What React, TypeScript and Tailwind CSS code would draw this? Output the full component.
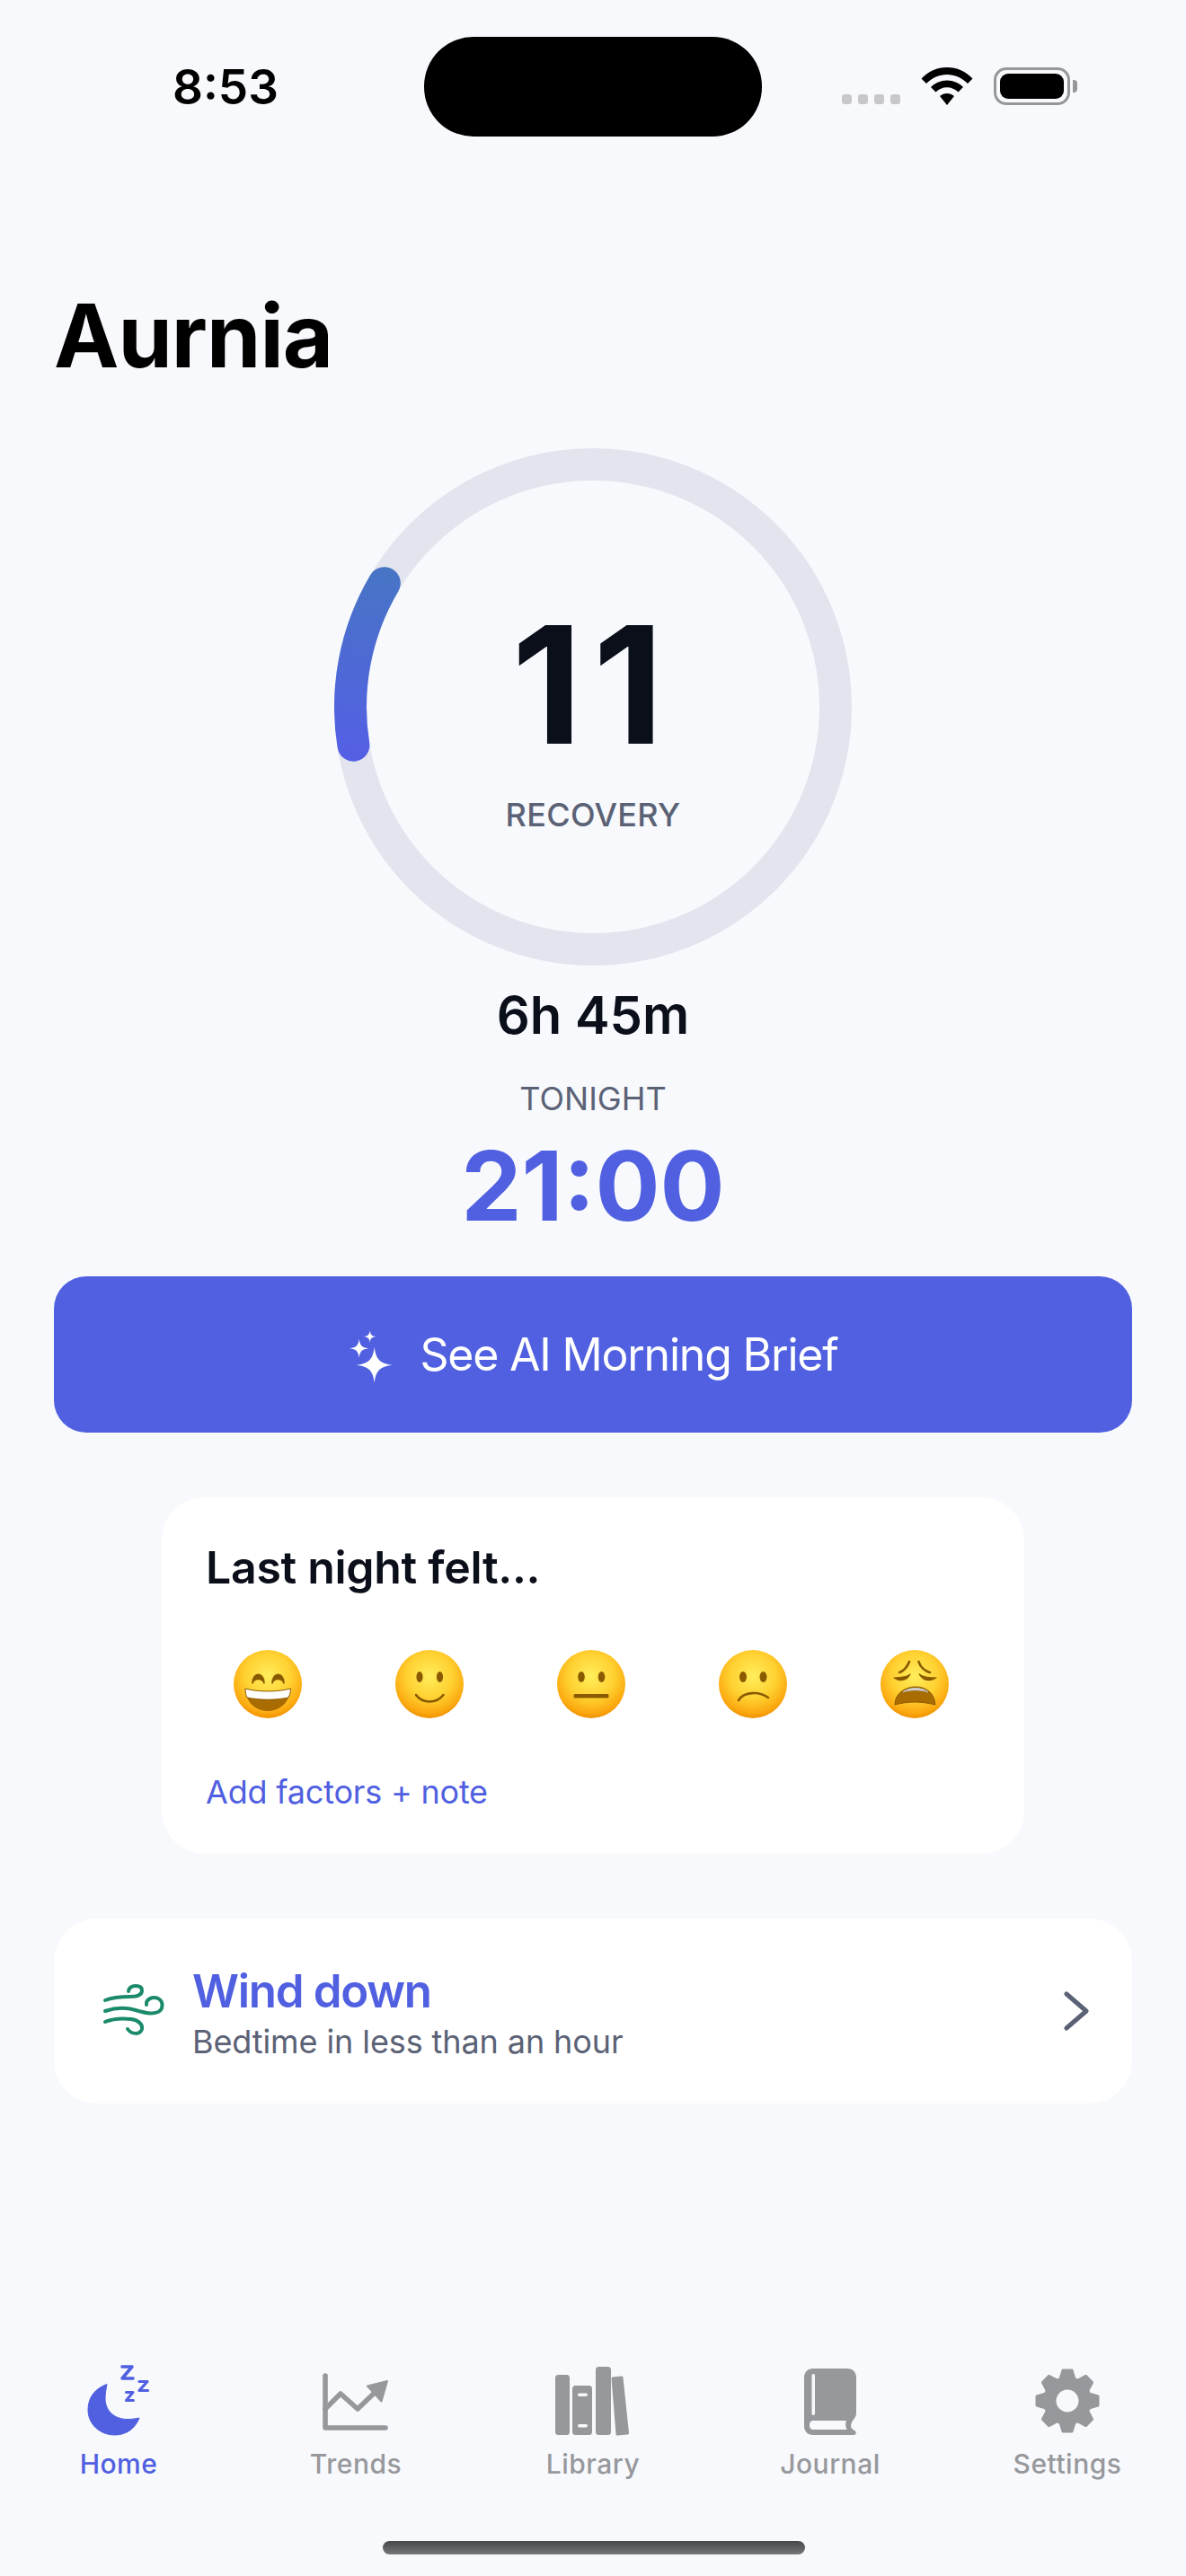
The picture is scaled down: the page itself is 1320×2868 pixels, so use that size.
import React from "react";

const INDIGO = "#5060E0";
const GRAY = "#97989C";

function Star({ cx, cy, r }: { cx: number; cy: number; r: number }) {
  const k = r * 0.14;
  return (
    <path
      d={`M${cx} ${cy - r} C${cx + k * 0.6} ${cy - k * 2.2} ${cx + k * 2.2} ${cy - k * 0.6} ${cx + r} ${cy} C${cx + k * 2.2} ${cy + k * 0.6} ${cx + k * 0.6} ${cy + k * 2.2} ${cx} ${cy + r} C${cx - k * 0.6} ${cy + k * 2.2} ${cx - k * 2.2} ${cy + k * 0.6} ${cx - r} ${cy} C${cx - k * 2.2} ${cy - k * 0.6} ${cx - k * 0.6} ${cy - k * 2.2} ${cx} ${cy - r}Z`}
      fill="#fff"
    />
  );
}

function Sparkles() {
  return (
    <svg width="70" height="80" viewBox="0 0 70 80" className="shrink-0" aria-hidden>
      <Star cx={37.7} cy={51.7} r={20} />
      <Star cx={20.7} cy={33.3} r={10.5} />
      <Star cx={32.7} cy={20} r={6.8} />
    </svg>
  );
}

type Mood = "grin" | "smile" | "neutral" | "frown" | "weary";

function Emoji({ kind }: { kind: Mood }) {
  const id = `face-${kind}`;
  const brown = "#8A5A00";
  return (
    <svg width="76" height="76" viewBox="-38 -38 76 76" className="shrink-0" aria-hidden>
      <defs>
        <radialGradient id={id} cx="50%" cy="38%" r="62%">
          <stop offset="0%" stopColor="#FFEE5C" />
          <stop offset="55%" stopColor="#FFD030" />
          <stop offset="88%" stopColor="#FBA90F" />
          <stop offset="100%" stopColor="#F09000" />
        </radialGradient>
      </defs>
      <circle r="38" fill={`url(#${id})`} />
      {kind === "grin" && (
        <g>
          <path d="M-17 -1 C-17 -14 -4 -14 -4 -1 C-6 -7 -15 -7 -17 -1Z" fill={brown} stroke={brown} strokeWidth="1.5" strokeLinejoin="round" />
          <path d="M5 -1 C5 -14 18 -14 18 -1 C16 -7 7 -7 5 -1Z" fill={brown} stroke={brown} strokeWidth="1.5" strokeLinejoin="round" />
          <path d="M-25 5 C-10 9 10 9 25.5 5 C25 20 13 30 0 30 C-13 30 -25 20 -25 5Z" fill="#A96C00" />
          <path d="M-25 5 C-10 9 10 9 25.5 5 C25.5 9 24.5 12 23 15 C8 18 -8 18 -23 15 C-24.5 12 -25 9 -25 5Z" fill="#fff" stroke="#8A5A00" strokeWidth="1" />
        </g>
      )}
      {kind === "smile" && (
        <g fill={brown}>
          <ellipse cx="-11" cy="-8" rx="3.6" ry="6" />
          <ellipse cx="11.5" cy="-8" rx="3.6" ry="6" />
          <path d="M-15 12 C-8 22 8 22 15.5 12" fill="none" stroke={brown} strokeWidth="2.6" strokeLinecap="round" />
        </g>
      )}
      {kind === "neutral" && (
        <g fill={brown}>
          <ellipse cx="-11" cy="-8" rx="3.8" ry="6" />
          <ellipse cx="11.5" cy="-8" rx="3.8" ry="6" />
          <rect x="-19.5" y="11" width="39" height="4.5" rx="1.5" />
        </g>
      )}
      {kind === "frown" && (
        <g fill={brown}>
          <ellipse cx="-11" cy="-8" rx="4" ry="6" />
          <ellipse cx="11.5" cy="-8" rx="4" ry="6" />
          <path d="M-16 18 C-10 8 7 8 17 15" fill="none" stroke={brown} strokeWidth="2.6" strokeLinecap="round" />
        </g>
      )}
      {kind === "weary" && (
        <g>
          <path d="M-17 -13 C-13 -14 -8 -19 -6 -25" fill="none" stroke={brown} strokeWidth="2.6" strokeLinecap="round" />
          <path d="M17 -13 C12 -14 6 -19 4.500 -25" fill="none" stroke={brown} strokeWidth="2.6" strokeLinecap="round" />
          <path d="M-23 -7 C-17 -3 -9 -3 -5 -11 C-8 -8 -16 -7 -23 -7Z" fill={brown} stroke={brown} strokeWidth="1.2" strokeLinejoin="round" />
          <path d="M24 -7 C17 -3 10 -3 5 -11 C9 -8 16 -7 24 -7Z" fill={brown} stroke={brown} strokeWidth="1.2" strokeLinejoin="round" />
          <path d="M-22 23 C-22 10 -10 3 1 3 C13 3 22 10 23 23 C8 19 -8 19 -22 23Z" fill="#A96C00" stroke={brown} strokeWidth="1" strokeLinejoin="round" />
          <path d="M-13 9 C-7 3 9 3 15 9 C8 6 -6 6 -13 9Z" fill="#E4E4E4" stroke="#B8B8B8" strokeWidth="1" />
        </g>
      )}
    </svg>
  );
}

function WindIcon() {
  return (
    <svg width="90" height="80" viewBox="0 0 90 80" fill="none" stroke="#1B8A6B" strokeWidth="4" strokeLinecap="round" className="shrink-0" aria-hidden>
      <path d="M12 28 C22 24 32 24 40 24 C49 24 53 21 53 17 C53 13 49 12 46 12 C41 12 38 15 38 18" />
      <path d="M12 40 C24 36 36 36 46 39 C56 42 64 44 71 41 C77 38 77 29 71 26 C65 23 57 27 58 33" />
      <path d="M12 52 C22 48 32 48 41 49 C49 50 54 55 53 60 C51 67 41 66 37 60" />
    </svg>
  );
}

function HomeIcon() {
  return (
    <svg width="80" height="84" viewBox="92 2632 80 84" aria-hidden>
      <path fill={INDIGO} stroke={INDIGO} strokeWidth="1" strokeLinejoin="round" d="M119 2655.500 C106 2660 98 2670 98 2684 C98 2700 111 2712 128 2712 C141 2712 151 2704 155 2693 C150 2694 146 2694.500 141 2694.500 C127 2694 117 2685 117 2671 C117 2666 118 2661 119 2655.500Z" />
      <g fill="none" stroke={INDIGO} strokeLinejoin="round" strokeLinecap="round">
        <path strokeWidth="3.600" d="M136 2636 H147 L136 2649 H148" />
        <path strokeWidth="3.200" d="M155 2652.500 H164 L155 2662.500 H164.500" />
        <path strokeWidth="3" d="M140.500 2664.500 H148 L140.500 2673.500 H148.500" />
      </g>
    </svg>
  );
}

function TrendsIcon() {
  return (
    <svg width="80" height="84" viewBox="355 2632 80 84" aria-hidden>
      <path fill="none" stroke={GRAY} strokeWidth="5.600" strokeLinecap="round" strokeLinejoin="round" d="M361 2646 V2704 H428" />
      <path fill="none" stroke={GRAY} strokeWidth="5.600" strokeLinecap="round" strokeLinejoin="round" d="M361 2683 L378 2666 L397 2683 L418 2663" />
      <path fill={GRAY} stroke={GRAY} strokeWidth="2" strokeLinejoin="round" d="M430 2652 L408 2657.500 L423.500 2674.500Z" />
    </svg>
  );
}

function LibraryIcon() {
  return (
    <svg width="84" height="84" viewBox="618 2632 84 84" aria-hidden>
      <rect x="618" y="2645" width="16" height="67" rx="3.500" fill={GRAY} />
      <rect x="637" y="2657" width="22" height="55" rx="3.500" fill={GRAY} />
      <rect x="643" y="2665.500" width="11" height="3.500" rx="1.700" fill="#F7F9FD" />
      <rect x="643" y="2700" width="11" height="3.500" rx="1.700" fill="#F7F9FD" />
      <rect x="663" y="2636" width="17" height="76" rx="3.500" fill={GRAY} />
      <path fill={GRAY} stroke={GRAY} strokeWidth="3" strokeLinejoin="round" d="M682 2649 L692 2648 L698.500 2710 L687 2711Z" />
    </svg>
  );
}

function JournalIcon() {
  return (
    <svg width="66" height="84" viewBox="890 2632 66 84" aria-hidden>
      <path fill={GRAY} d="M904 2638 H942 C948 2638 952 2642 952 2648 V2688 C952 2692 949 2694 947 2698 C945 2702 946 2705 950 2707 C953 2709 952 2712 949 2712 H904 C898 2712 894 2708 894 2702 V2648 C894 2642 898 2638 904 2638Z" />
      <rect x="902.500" y="2644" width="3.500" height="46" rx="1.700" fill="#F7F9FD" />
      <path fill="#F7F9FD" d="M904 2696 H941 C939.500 2699.500 940 2703 941.500 2706 H904 C901 2706 900 2703.500 900 2701 C900 2698.500 901 2696 904 2696Z" />
    </svg>
  );
}

function GearIcon() {
  const angles = [0, 45, 90, 135, 180, 225, 270, 315];
  return (
    <svg width="76" height="84" viewBox="-38 -42 76 84" aria-hidden>
      <path fillRule="evenodd" fill={GRAY} d="M0 -27 A27 27 0 1 1 0 27 A27 27 0 1 1 0 -27Z M0 -12.500 A12.500 12.500 0 1 0 0 12.500 A12.500 12.500 0 1 0 0 -12.500Z" />
      {angles.map((a) => (
        <path key={a} transform={`rotate(${a})`} fill={GRAY} stroke={GRAY} strokeWidth="3" strokeLinejoin="round" d="M-8 -24 L-5 -34 H5 L8 -24Z" />
      ))}
    </svg>
  );
}

function Tab({ label, active, children }: { label: string; active?: boolean; children: React.ReactNode }) {
  return (
    <div className="flex-1 flex flex-col items-center">
      <div className="h-[84px] flex items-center justify-center">{children}</div>
      <span className={`mt-[10px] text-[30px] leading-[36px] tracking-[0.5px] font-medium ${active ? "text-[#5060E0]" : "text-[#97989C]"}`}>{label}</span>
    </div>
  );
}

export default function App() {
  return (
    <div className="w-[1320px] h-[2868px] bg-[#F7F9FD] flex flex-col overflow-hidden text-[#0B0F1A] [font-family:Inter,'Liberation_Sans',sans-serif]">
      {/* Status bar */}
      <div className="flex items-start pt-[41px] shrink-0">
        <div className="w-[472px] pl-[192px] pt-[32px] text-[53px] leading-[48px] font-semibold text-black">8:53</div>
        <div className="w-[376px] h-[111px] rounded-[55px] bg-black shrink-0" />
        <div className="flex items-end gap-[23px] pl-[89px] pt-[34px]">
          <div className="flex gap-[7px] pb-[1px]">
            <span className="w-[11px] h-[11px] rounded-[3px] bg-[#C8C8CC]" />
            <span className="w-[11px] h-[11px] rounded-[3px] bg-[#C8C8CC]" />
            <span className="w-[11px] h-[11px] rounded-[3px] bg-[#C8C8CC]" />
            <span className="w-[11px] h-[11px] rounded-[3px] bg-[#C8C8CC]" />
          </div>
          <svg width="58" height="42" viewBox="0 0 58 42" aria-hidden>
            <path fill="#000" d="M29 0 C40 0 50 4.500 57.500 12.500 L52 18 C45.500 11.500 37.500 8 29 8 C20.500 8 12.500 11.500 6 18 L0.500 12.500 C8 4.500 18 0 29 0Z" />
            <path fill="#000" d="M29 14.500 C36 14.500 42 17.300 47 22 L41.500 27.500 C38 24.300 33.800 22.300 29 22.300 C24.200 22.300 20 24.300 16.500 27.500 L11 22 C16 17.300 22 14.500 29 14.500Z" />
            <path fill="#000" d="M29 29 C32 29 34.500 30 37 32 L29 42 L21 32 C23.500 30 26 29 29 29Z" />
          </svg>
          <div className="flex items-center gap-[3px]">
            <div className="w-[85px] h-[42px] rounded-[14px] border-[3px] border-[#979797] p-[4px]">
              <div className="w-full h-full rounded-[9px] bg-black" />
            </div>
            <span className="w-[5px] h-[14px] rounded-r-[4px] bg-[#979797]" />
          </div>
        </div>
      </div>

      {/* Title */}
      <h1 className="mt-[170px] pl-[60px] text-[97px] leading-[104px] font-bold text-black tracking-[-1px]">Aurnia</h1>

      {/* Ring */}
      <div className="mt-[73px] self-center w-[576px] h-[576px] grid shrink-0">
        <svg width="576" height="576" viewBox="0 0 576 576" className="[grid-area:1/1]" aria-hidden>
          <defs>
            <linearGradient id="arc" gradientUnits="userSpaceOnUse" x1="30" y1="340" x2="60" y2="130">
              <stop offset="0%" stopColor="#5460E4" />
              <stop offset="100%" stopColor="#4775C4" />
            </linearGradient>
          </defs>
          <circle cx="288" cy="288" r="270" fill="none" stroke="#E3E5EE" strokeWidth="36" />
          <path d="M21.400 330.700 A270 270 0 0 1 55.800 150.200" fill="none" stroke="url(#arc)" strokeWidth="36" strokeLinecap="round" />
        </svg>
        <div className="[grid-area:1/1] flex flex-col items-center pt-[172px]">
          <span className="text-[182px] leading-[182px] font-bold tracking-[12px] text-[#0B0F1A]">11</span>
          <span className="mt-[32px] text-[36px] leading-[44px] font-medium tracking-[0.3px] text-[#5B6276]">RECOVERY</span>
        </div>
      </div>

      <div className="mt-[19px] text-center text-[58px] leading-[72px] font-semibold text-[#0B0F1A]">6h 45m</div>
      <div className="mt-[35px] text-center text-[36px] leading-[44px] text-[#5B6276]">TONIGHT</div>
      <div className="mt-[15px] text-center text-[107px] leading-[120px] font-bold text-[#5060E0]">21:00</div>

      {/* Button */}
      <div className="mt-[41px] mx-[60px] h-[174px] rounded-[36px] bg-[#5060E0] flex items-center justify-center gap-[18px] pr-[8px] shrink-0">
        <Sparkles />
        <span className="text-[50px] tracking-[-1.2px] text-white">See AI Morning Brief</span>
      </div>

      {/* Feeling card */}
      <div className="mt-[72px] mx-[180px] h-[397px] rounded-[48px] bg-white pl-[49px] pt-[46px] shrink-0">
        <div className="text-[50px] leading-[64px] font-semibold tracking-[-0.3px] text-[#0B0F1A]">Last night felt...</div>
        <div className="mt-[60px] flex items-center gap-[104px] pl-[31px]">
          <Emoji kind="grin" />
          <Emoji kind="smile" />
          <Emoji kind="neutral" />
          <Emoji kind="frown" />
          <Emoji kind="weary" />
        </div>
        <div className="mt-[58px] text-[36px] leading-[48px] tracking-[-0.2px] text-[#5060E0]">Add factors + note</div>
      </div>

      {/* Wind down */}
      <div className="mt-[72px] mx-[60px] h-[206px] rounded-[48px] bg-white flex items-center pl-[45px] pr-[48px] shrink-0">
        <WindIcon />
        <div className="ml-[19px] pt-[4px] flex-1 flex flex-col">
          <span className="text-[51px] leading-[64px] font-semibold tracking-[-1.3px] text-[#5060E0]">Wind down</span>
          <span className="text-[36px] leading-[48px] tracking-[-0.1px] text-[#5B6276]">Bedtime in less than an hour</span>
        </div>
        <svg width="28" height="44" viewBox="0 0 28 44" fill="none" stroke="#5B6276" strokeWidth="5" strokeLinecap="round" strokeLinejoin="round" aria-hidden>
          <path d="M3 3 L25 22 L3 41" />
        </svg>
      </div>

      {/* Tabs */}
      <div className="mt-auto flex shrink-0">
        <Tab label="Home" active><HomeIcon /></Tab>
        <Tab label="Trends"><TrendsIcon /></Tab>
        <Tab label="Library"><LibraryIcon /></Tab>
        <Tab label="Journal"><JournalIcon /></Tab>
        <Tab label="Settings"><GearIcon /></Tab>
      </div>

      {/* Home indicator */}
      <div className="mt-[68px] mb-[24px] ml-[426px] self-start w-[470px] h-[15px] rounded-full bg-gradient-to-b from-[#46474A] to-[#77787B] shrink-0" />
    </div>
  );
}
